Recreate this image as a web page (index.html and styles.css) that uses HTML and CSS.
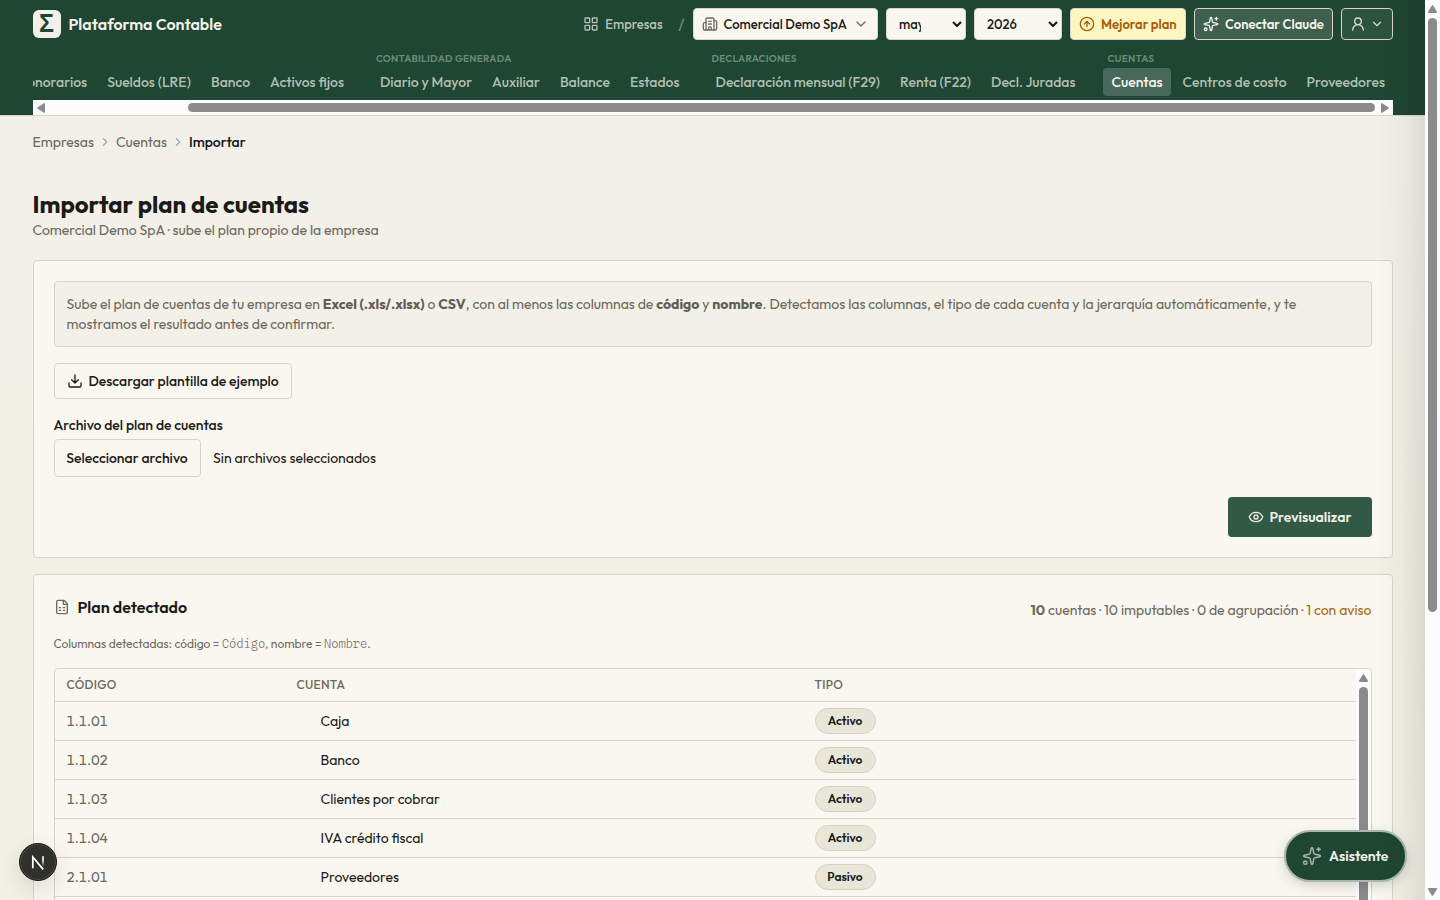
FILE: index.html
```
<!DOCTYPE html>
<html lang="es">
<head>
    <meta charset="UTF-8">
    <meta name="viewport" content="width=device-width, initial-scale=1.0">
    <title>Importar plan de cuentas</title>
    <link rel="stylesheet" href="styles.css">
</head>
<body>
    <!-- Iconos -->
    <svg class="sprite">
        <symbol id="i-grid" viewBox="0 0 24 24"><rect width="7" height="7" x="3" y="3" rx="1"/><rect width="7" height="7" x="14" y="3" rx="1"/><rect width="7" height="7" x="14" y="14" rx="1"/><rect width="7" height="7" x="3" y="14" rx="1"/></symbol>
        <symbol id="i-building" viewBox="0 0 24 24"><path d="M10 12h4M10 8h4M14 21v-3a2 2 0 0 0-4 0v3M6 10H4a2 2 0 0 0-2 2v7a2 2 0 0 0 2 2h16a2 2 0 0 0 2-2V9a2 2 0 0 0-2-2h-2"/><path d="M6 21V5a2 2 0 0 1 2-2h8a2 2 0 0 1 2 2v16"/></symbol>
        <symbol id="i-down" viewBox="0 0 24 24"><path d="m6 9 6 6 6-6"/></symbol>
        <symbol id="i-right" viewBox="0 0 24 24"><path d="m9 18 6-6-6-6"/></symbol>
        <symbol id="i-up-circle" viewBox="0 0 24 24"><circle cx="12" cy="12" r="10"/><path d="m16 12-4-4-4 4M12 16V8"/></symbol>
        <symbol id="i-sparkles" viewBox="0 0 24 24"><path d="M11.017 2.814a1 1 0 0 1 1.966 0l1.051 5.558a2 2 0 0 0 1.594 1.594l5.558 1.051a1 1 0 0 1 0 1.966l-5.558 1.051a2 2 0 0 0-1.594 1.594l-1.051 5.558a1 1 0 0 1-1.966 0l-1.051-5.558a2 2 0 0 0-1.594-1.594l-5.558-1.051a1 1 0 0 1 0-1.966l5.558-1.051a2 2 0 0 0 1.594-1.594zM20 2v4M22 4h-4"/><circle cx="4" cy="20" r="2"/></symbol>
        <symbol id="i-user" viewBox="0 0 24 24"><circle cx="12" cy="8" r="5"/><path d="M20 21a8 8 0 0 0-16 0"/></symbol>
        <symbol id="i-download" viewBox="0 0 24 24"><path d="M12 15V3M21 15v4a2 2 0 0 1-2 2H5a2 2 0 0 1-2-2v-4M7 10l5 5 5-5"/></symbol>
        <symbol id="i-eye" viewBox="0 0 24 24"><path d="M2.062 12.348a1 1 0 0 1 0-.696 10.75 10.75 0 0 1 19.876 0 1 1 0 0 1 0 .696 10.75 10.75 0 0 1-19.876 0"/><circle cx="12" cy="12" r="3"/></symbol>
        <symbol id="i-sheet" viewBox="0 0 24 24"><path d="M6 22a2 2 0 0 1-2-2V4a2 2 0 0 1 2-2h8a2.4 2.4 0 0 1 1.704.706l3.588 3.588A2.4 2.4 0 0 1 20 8v12a2 2 0 0 1-2 2z"/><path d="M14 2v5a1 1 0 0 0 1 1h5M8 13h2M14 13h2M8 17h2M14 17h2"/></symbol>
    </svg>

    <div class="page">
        <header class="header">
            <div class="container topbar">
                <div class="brand"><span class="logo">Σ</span>Plataforma Contable</div>
                <div class="actions">
                    <a class="home"><svg class="icon"><use href="#i-grid"/></svg>Empresas</a>
                    <span class="slash">/</span>
                    <button class="control company"><svg class="icon"><use href="#i-building"/></svg><span>Comercial Demo SpA</span><svg class="icon chevron"><use href="#i-down"/></svg></button>
                    <div class="control select month"><span>mayo</span><svg class="caret" viewBox="0 0 10 6"><path d="M1 1l4 4 4-4"/></svg></div>
                    <div class="control select year"><span>2026</span><svg class="caret" viewBox="0 0 10 6"><path d="M1 1l4 4 4-4"/></svg></div>
                    <button class="control upgrade"><svg class="icon"><use href="#i-up-circle"/></svg>Mejorar plan</button>
                    <button class="control connect"><svg class="icon"><use href="#i-sparkles"/></svg>Conectar Claude</button>
                    <button class="control user"><svg class="icon"><use href="#i-user"/></svg><svg class="icon small"><use href="#i-down"/></svg></button>
                </div>
            </div>

            <div class="container nav">
                <div class="group"><div class="links"><a>Honorarios</a><a>Sueldos (LRE)</a><a>Banco</a><a>Activos fijos</a></div></div>
                <div class="group"><p>CONTABILIDAD GENERADA</p><div class="links"><a>Diario y Mayor</a><a>Auxiliar</a><a>Balance</a><a>Estados</a></div></div>
                <div class="group"><p>DECLARACIONES</p><div class="links"><a>Declaración mensual (F29)</a><a>Renta (F22)</a><a>Decl. Juradas</a></div></div>
                <div class="group"><p>CUENTAS</p><div class="links"><a class="active">Cuentas</a><a>Centros de costo</a><a>Proveedores</a></div></div>
            </div>
            <div class="container hscroll">
                <svg viewBox="0 0 8 10"><path d="M8 .3v9.4H7L.3 5.6v-1L7 .3z"/></svg>
                <div class="hthumb"></div>
                <svg viewBox="0 0 8 10"><path d="M0 .3v9.4h1l6.7-4.1v-1L1 .3z"/></svg>
            </div>
        </header>

        <main class="container">
            <nav class="crumbs">Empresas<svg class="icon small"><use href="#i-right"/></svg>Cuentas<svg class="icon small"><use href="#i-right"/></svg><b>Importar</b></nav>

            <h1>Importar plan de cuentas</h1>
            <p class="subtitle">Comercial Demo SpA · sube el plan propio de la empresa</p>

            <section class="card upload">
                <div class="info">Sube el plan de cuentas de tu empresa en <b>Excel (.xls/.xlsx)</b> o <b>CSV</b>, con al menos las columnas de <b>código</b> y <b>nombre</b>. Detectamos las columnas, el tipo de cada cuenta y la jerarquía automáticamente, y te mostramos el resultado antes de confirmar.</div>
                <button class="download"><svg class="icon"><use href="#i-download"/></svg>Descargar plantilla de ejemplo</button>
                <label class="file-label">Archivo del plan de cuentas</label>
                <div class="file"><button>Seleccionar archivo</button><span>Sin archivos seleccionados</span></div>
                <div class="submit"><button class="preview"><svg class="icon"><use href="#i-eye"/></svg>Previsualizar</button></div>
            </section>

            <section class="card result">
                <div class="result-head">
                    <h2><svg class="icon"><use href="#i-sheet"/></svg>Plan detectado</h2>
                    <p class="stats"><b>10</b> cuentas · 10 imputables · 0 de agrupación · <span>1 con aviso</span></p>
                </div>
                <p class="columns">Columnas detectadas: código = <code>Código</code>, nombre = <code>Nombre</code>.</p>
                <div class="table-box">
                    <table>
                        <thead><tr><th class="c1">CÓDIGO</th><th class="c2">CUENTA</th><th>TIPO</th></tr></thead>
                        <tbody>
                            <tr><td>1.1.01</td><td>Caja</td><td><span class="badge">Activo</span></td></tr>
                            <tr><td>1.1.02</td><td>Banco</td><td><span class="badge">Activo</span></td></tr>
                            <tr><td>1.1.03</td><td>Clientes por cobrar</td><td><span class="badge">Activo</span></td></tr>
                            <tr><td>1.1.04</td><td>IVA crédito fiscal</td><td><span class="badge">Activo</span></td></tr>
                            <tr><td>2.1.01</td><td>Proveedores</td><td><span class="badge">Pasivo</span></td></tr>
                            <tr><td></td><td></td><td></td></tr>
                        </tbody>
                    </table>
                    <div class="vscroll"><svg class="arrow" viewBox="0 0 9 8"><path d="M4 .3h1L8.8 6.5V8H.2V6.5z"/></svg><div class="vthumb"></div></div>
                </div>
            </section>
        </main>
    </div>

    <div class="vscroll page-scroll">
        <svg class="arrow" viewBox="0 0 9 8"><path d="M4 .3h1L8.8 6.5V8H.2V6.5z"/></svg>
        <div class="vthumb"></div>
        <svg class="arrow last" viewBox="0 0 9 8"><path d="M4 7.7h1L8.8 1.5V0H.2v1.5z"/></svg>
    </div>

    <div class="dev-badge"><svg viewBox="0 0 36 36">
        <defs><linearGradient id="fade" x1="0" y1="0" x2="0" y2="1"><stop offset="0.4" stop-color="#fff"/><stop offset="1" stop-color="#fff" stop-opacity="0"/></linearGradient></defs>
        <path d="M12.8 24.2V13L23.2 25.4" fill="none" stroke="#fff" stroke-width="1.7"/>
        <rect x="22.2" y="12.2" width="1.6" height="10.5" fill="url(#fade)"/></svg></div>
    <button class="assistant"><svg class="icon"><use href="#i-sparkles"/></svg>Asistente</button>
    <div class="drawer-shadow"></div>
</body>
</html>
```
FILE: styles.css
```
* {
    box-sizing: border-box;
}

body {
    display: flex;
    margin: 0;
    height: 900px;
    overflow: hidden;
    background: #f3f0e9;
    font-family: Outfit, Lato, sans-serif;
    font-size: 14px;
    line-height: 20px;
    color: #1a1a17;
}

h1, h2, p {
    margin: 0;
}

button {
    font: inherit;
    color: inherit;
    white-space: nowrap;
}

.sprite {
    display: none;
}

.icon {
    width: 16px;
    height: 16px;
    flex: none;
    fill: none;
    stroke: currentColor;
    stroke-width: 2;
    stroke-linecap: round;
    stroke-linejoin: round;
}

.icon.small {
    width: 14px;
    height: 14px;
}

.page {
    width: 1425px;
    height: 900px;
    overflow: hidden;
    background: linear-gradient(#f3f0e9 180px, #f2efe4 560px, #f3f0e6);
}

.container {
    width: 1360px;
    margin: 0 auto;
}

/* Cabecera */
.header {
    height: 116px;
    background: #1e4632;
    border-bottom: 1px solid #d8d5c8;
    color: #f3f0e9;
}

.topbar {
    height: 48px;
    display: flex;
    align-items: center;
    justify-content: space-between;
}

.brand {
    display: flex;
    align-items: center;
    gap: 8px;
    font-size: 16px;
    font-weight: 600;
}

.logo {
    width: 28px;
    height: 28px;
    border-radius: 6px;
    background: #f3f0e9;
    color: #1e4632;
    font: bold 25px/26px "Liberation Sans", sans-serif;
    text-align: center;
}

.actions {
    display: flex;
    align-items: center;
    gap: 8px;
    font-size: 13px;
    font-weight: 500;
}

.home {
    display: flex;
    align-items: center;
    gap: 6px;
    color: #b4c1b5;
}

.slash {
    width: 14px;
    text-align: right;
    font-size: 16px;
    font-weight: 400;
    color: #7b9182;
}

.control {
    height: 32px;
    display: flex;
    align-items: center;
    gap: 6px;
    padding: 0 8px;
    border: 1px solid #d8d5c8;
    border-radius: 4px;
    background: #faf7f0;
    color: #1a1a17;
    white-space: nowrap;
}

.company {
    width: 185px;
}

.company .icon {
    color: #6b6960;
}

.company .chevron {
    margin-left: auto;
}

.select {
    justify-content: space-between;
    padding: 0 3px 0 12.5px;
}

.select span {
    overflow: hidden;
}

.month {
    width: 80px;
}

.month span {
    width: 22px;
}

.year {
    width: 88px;
}

.caret {
    width: 10px;
    height: 6px;
    fill: none;
    stroke: #111;
    stroke-width: 2;
}

.upgrade {
    width: 116px;
    background: #fdf6c0;
    color: #a55f0c;
    font-weight: 600;
}

.connect {
    width: 139px;
    background: #3f604f;
    color: #f3f0e9;
    font-weight: 600;
}

.upgrade, .connect {
    padding-left: 8.5px;
}

.user {
    width: 52px;
    background: #2c5240;
    color: #d8ddd2;
    gap: 4px;
}

.nav {
    width: 1360.5px;
    height: 52px;
    margin-left: 32.5px;
    display: flex;
    justify-content: flex-end;
    align-items: flex-end;
    gap: 20px;
    padding-bottom: 4px;
    overflow: hidden;
}

.group {
    flex: none;
}

.group p {
    margin-left: 4px;
    font-size: 10px;
    font-weight: 600;
    line-height: 18px;
    letter-spacing: 0.25px;
    color: #6d8a78;
}

.links {
    display: flex;
    gap: 4px;
}

.links a {
    height: 28px;
    padding: 0 8px;
    border-radius: 4px;
    font-weight: 500;
    line-height: 28px;
    white-space: nowrap;
    color: #b0beb1;
}

.links .active {
    background: #47685a;
    color: #faf7f0;
}

/* Barras de desplazamiento */
.hscroll {
    height: 15px;
    display: flex;
    align-items: center;
    padding: 0 4px;
    background: #fcfcfc;
}

.hscroll svg {
    width: 8px;
    height: 10px;
    fill: #8b8b8b;
}

.hthumb {
    width: 1187px;
    height: 9px;
    margin-left: auto;
    margin-right: 6px;
    border-radius: 5px;
    background: #8b8b8b;
}

.vscroll {
    width: 15px;
    flex: none;
    display: flex;
    flex-direction: column;
    align-items: center;
    padding-top: 5px;
    background: #fcfcfc;
}

.arrow {
    width: 9px;
    height: 8px;
    flex: none;
    fill: #8b8b8b;
}

.vthumb {
    width: 9px;
    flex: 1;
    margin-top: 5px;
    border-radius: 5px;
    background: #8b8b8b;
}

.page-scroll {
    height: 900px;
    padding-bottom: 4px;
}

.page-scroll .vthumb {
    flex: none;
    height: 594px;
}

.last {
    margin-top: auto;
}

/* Contenido */
.crumbs {
    display: flex;
    align-items: center;
    gap: 4px;
    height: 20px;
    margin-top: 16px;
    color: #6b6960;
}

.crumbs .icon {
    color: #a8a699;
}

.crumbs b {
    font-weight: 500;
    color: #111;
}

h1 {
    margin-top: 36px;
    font-size: 24px;
    font-weight: 700;
    line-height: 32px;
}

.subtitle {
    margin-bottom: 20px;
    color: #6b6960;
}

.card {
    padding: 20px;
    margin-bottom: 16px;
    border: 1px solid #d8d5c8;
    border-radius: 4px;
    background: #faf7f0;
}

.upload {
    height: 298px;
}

.info {
    height: 66px;
    padding: 12px;
    border: 1px solid #d8d5c8;
    border-radius: 4px;
    background: #f3f0e8;
    color: #6b6960;
}

.info b {
    color: #5f5d54;
}

.download {
    display: flex;
    align-items: center;
    gap: 6px;
    width: 238px;
    height: 36px;
    margin: 16px 0;
    padding: 0 12px;
    border: 1px solid #d8d5c8;
    border-radius: 4px;
    background: #faf7f0;
    font-weight: 500;
}

.file-label {
    display: block;
    margin-bottom: 4px;
    font-weight: 500;
}

.file {
    display: flex;
    align-items: center;
    gap: 12.5px;
}

.file button {
    width: 147px;
    height: 38px;
    padding: 0;
    border: 1px solid #d8d5c8;
    border-radius: 4px;
    background: #faf7f0;
    font-weight: 500;
}

.submit {
    display: flex;
    justify-content: flex-end;
    margin-top: 20px;
}

.preview {
    display: flex;
    align-items: center;
    justify-content: center;
    gap: 6px;
    width: 144px;
    height: 40px;
    border: none;
    border-radius: 4px;
    background: #325846;
    color: #f0eee4;
    font-weight: 600;
}

.result {
    height: 500px;
}

.result-head {
    display: flex;
    justify-content: space-between;
    height: 38px;
}

h2 {
    display: flex;
    align-items: center;
    gap: 8px;
    height: 24px;
    font-size: 16px;
    font-weight: 600;
}

h2 .icon {
    color: #6b6960;
}

.stats {
    margin-top: 5px;
    color: #6b6960;
}

.stats span {
    color: #a8690f;
}

.columns {
    margin: 2px 0 15px;
    font-size: 12px;
    line-height: 18px;
    height: 18px;
    color: #6b6960;
}

code {
    font-family: "Spline Sans Mono", "Liberation Mono", monospace;
    font-size: 12px;
    font-weight: 300;
}

.table-box {
    display: flex;
    height: 400px;
    border: 1px solid #d8d5c8;
    border-radius: 4px;
    overflow: hidden;
}

table {
    flex: 1;
    border-collapse: collapse;
    table-layout: fixed;
    height: 267px;
}

th, td {
    height: 39px;
    padding: 0 12px;
    border-bottom: 1px solid #d8d5c8;
    text-align: left;
}

th {
    height: 32px;
    font-size: 12px;
    font-weight: 500;
    letter-spacing: 0.3px;
    color: #6b6960;
}

.c1 {
    width: 230px;
}

.c2 {
    width: 518px;
}

td:nth-child(1) {
    font-variant-numeric: tabular-nums;
    color: #6b6960;
}

td:nth-child(2) {
    padding-left: 36px;
}

.badge {
    display: inline-block;
    width: 61px;
    height: 26px;
    border: 1px solid #d5d2c3;
    border-radius: 13px;
    background: #e8e5d9;
    font-size: 12px;
    font-weight: 600;
    line-height: 24px;
    text-align: center;
    vertical-align: middle;
}

/* Elementos flotantes */
.dev-badge {
    position: absolute;
    left: 19px;
    top: 843px;
    width: 38px;
    height: 38px;
    border: 1px solid #171715;
    border-radius: 50%;
    background: #30302d;
    box-shadow: inset 0 0 0 1px #4b4b48, 0 8px 24px rgba(0, 0, 0, 0.12);
}

.dev-badge svg {
    display: block;
    width: 36px;
    height: 36px;
}

.assistant {
    position: absolute;
    left: 1284px;
    top: 830px;
    display: flex;
    align-items: center;
    gap: 7px;
    width: 123px;
    height: 52px;
    padding: 0 16px;
    border: 2px solid #a9b8a9;
    border-radius: 26px;
    background: #1e4632;
    box-shadow: 0 4px 12px rgba(0, 0, 0, 0.15);
    color: #f3f0e9;
    font-weight: 600;
}

.assistant .icon {
    width: 20px;
    height: 20px;
    color: #a9b8a9;
    stroke-width: 1.75;
}

.drawer-shadow {
    position: absolute;
    left: 1375px;
    top: 0;
    width: 50px;
    height: 900px;
    background: linear-gradient(to right, rgba(0, 0, 0, 0), rgba(0, 0, 0, 0.025) 50%, rgba(0, 0, 0, 0.09));
}
```
